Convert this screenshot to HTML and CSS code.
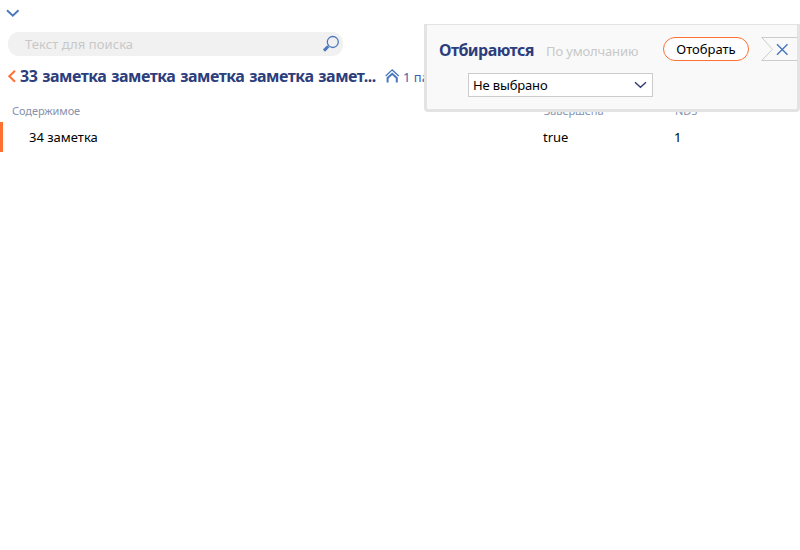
FILE: index.html
```html
<!DOCTYPE html>
<html lang="ru">
<head>
<meta charset="utf-8">
<title>Заметки</title>
<link rel="stylesheet" href="styles.css">
</head>
<body>
<header class="topbar">
  <svg class="topbar-arrow" width="14" height="9" viewBox="0 0 14 9"><path d="M1 1.3 6.8 6.7 12.5 1.3"/></svg>
</header>
<div class="search">
  <span class="search-text">Текст для поиска</span>
  <svg class="search-icon" width="18" height="18" viewBox="0 0 18 18"><circle cx="10.8" cy="7" r="5.5"/><path class="handle" d="M6.3 11.3 2 15.6"/></svg>
</div>
<div class="heading">
  <svg class="back" width="9" height="14" viewBox="0 0 9 14"><path d="M8 1.8 2.3 7.3 8 12.8"/></svg>
  <h1 class="title">33 заметка заметка заметка заметка замет...</h1>
  <svg class="up" width="15" height="15" viewBox="0 0 15 15"><path d="M.7 7 7.2.9 13.8 7"/><path class="house" d="M2.6 13.5V9L7.2 4.8 11.8 9v4.5"/></svg>
  <span class="folder">1 папка</span>
</div>
<div class="row columns">
  <span class="c-content">Содержимое</span><span class="c-done">Завершена</span><span class="c-nds">NDS</span>
</div>
<div class="row record">
  <span class="c-content">34 заметка</span><span class="c-done">true</span><span class="c-nds">1</span>
</div>
<section class="filter">
  <div class="filter-head">
    <h2 class="filter-title">Отбираются</h2>
    <span class="filter-default">По умолчанию</span>
    <button class="apply"><span>Отобрать</span></button>
    <svg class="close" width="36" height="25" viewBox="0 0 36 25"><path class="flag" d="M36 .5H.7L11.5 12.3.7 23.5H36"/><path class="cross" d="m16 7.2 10.5 10.5M26.5 7.2 16 17.7"/></svg>
  </div>
  <div class="select">
    <span class="select-text">Не выбрано</span>
    <svg class="select-arrow" width="13" height="8" viewBox="0 0 13 8"><path d="M1 1.2 6.5 6.3 12 1.2"/></svg>
  </div>
</section>
</body>
</html>
```
FILE: styles.css
```css
* { box-sizing: border-box; }
body {
  margin: 0;
  height: 550px;
  overflow: hidden;
  position: relative;
  background: #fff;
  color: #000;
  font: 13px/20px "Noto Sans", "Open Sans", sans-serif;
  white-space: nowrap;
}
svg { display: block; flex: none; fill: none; stroke: #4b78bd; }
span, h1, h2 { flex: none; }
.topbar { height: 32px; padding: 9px 0 0 6px; }
.topbar-arrow { stroke-width: 2; }
.search {
  display: flex;
  align-items: center;
  justify-content: space-between;
  width: 335px;
  height: 24px;
  margin-left: 8px;
  padding: 0 3px 0 17px;
  border-radius: 11px;
  background: #f1f1f1;
}
.search-text { color: #c8c8c8; letter-spacing: .07px; }
.search-icon { stroke-width: 1.3; }
.search-icon .handle { stroke-width: 3; }
.heading { display: flex; align-items: center; height: 40px; padding-left: 7px; }
.back { stroke: #ff7033; stroke-width: 2; }
.title {
  width: 365px;
  margin: 0 0 0 4px;
  color: #2d3e7d;
  font-size: 16px;
  font-weight: 700;
  letter-spacing: -.48px;
  word-spacing: 1.2px;
}
.up { stroke-width: 1.3; }
.up .house { stroke-width: 2; }
.folder { margin: 2px 0 0 3px; color: #3b62b0; }
.row { display: grid; grid-template-columns: 531px 131px 1fr; }
.columns { height: 26px; padding: 5px 0 0 12px; color: #8792ad; font-size: 11px; letter-spacing: -.08px; }
.columns .c-done, .columns .c-nds { padding-left: 1px; }
.record { height: 30px; border-left: 3px solid #ff7033; padding-left: 9px; line-height: 30px; }
.record .c-content { padding-left: 17px; }
.filter {
  position: absolute;
  left: 424px;
  top: 24px;
  width: 376px;
  height: 88px;
  border: 3px solid #e3e3e3;
  border-top-width: 1px;
  border-radius: 0 0 4px 4px;
  background: #f9f9f9;
}
.filter-head { display: flex; height: 48px; padding: 12px 0 0 12px; }
.filter-title { width: 107px; margin: 3px 0 0; color: #2d3e7d; font-size: 16px; line-height: 20px; letter-spacing: -.55px; }
.filter-default { width: 117px; margin-top: 4px; color: #c8c8c8; letter-spacing: -.15px; }
.apply {
  width: 86px;
  height: 24px;
  padding: 0;
  border: 1px solid #ff7033;
  border-radius: 12px;
  background: #fff;
  color: #000;
  font: inherit;
  line-height: 20px;
}
.close { margin-left: auto; }
.close .flag { stroke: #ccc; }
.close .cross { stroke-width: 1.5; }
.select {
  display: flex;
  align-items: center;
  justify-content: space-between;
  width: 185px;
  height: 24px;
  margin-left: 41px;
  padding: 0 5px 0 4px;
  border: 1px solid #ccc;
  background: #fff;
}
.select-text { letter-spacing: -.15px; }
.select-arrow { stroke: #353b70; stroke-width: 1.4; }
```
